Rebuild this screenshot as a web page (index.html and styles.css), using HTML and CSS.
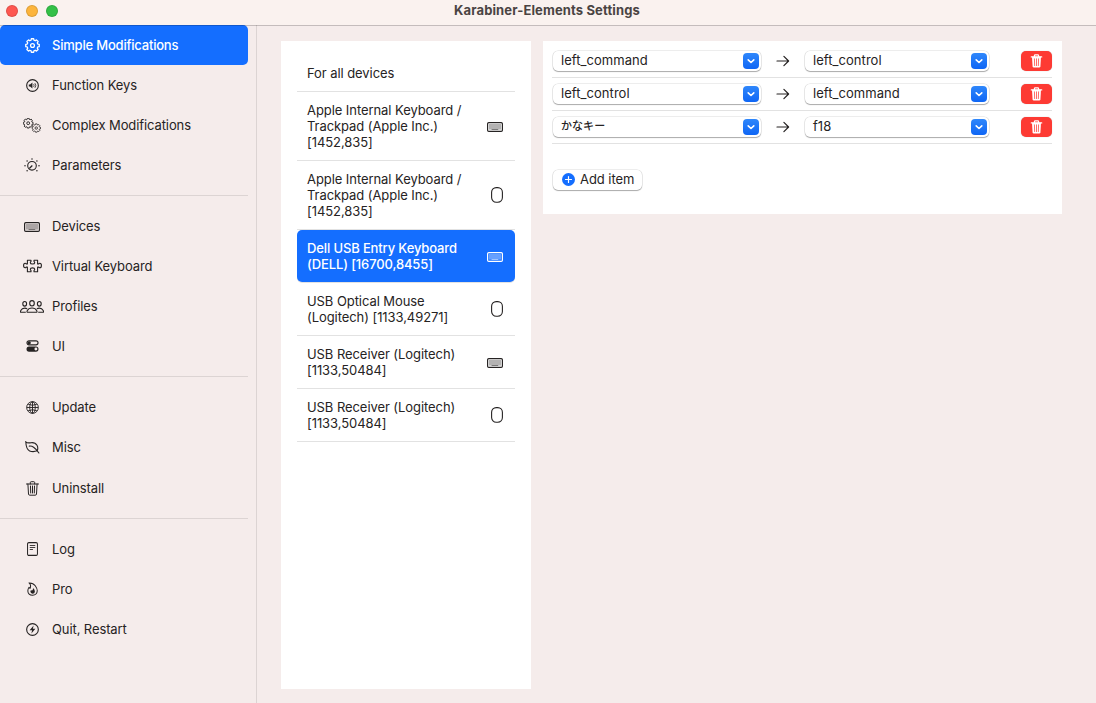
FILE: index.html
```html
<!DOCTYPE html>
<html lang="en">
<head>
    <meta charset="UTF-8">
    <meta name="viewport" content="width=device-width, initial-scale=1.0">
    <title>Karabiner-Elements Settings</title>
    <link rel="stylesheet" href="styles.css">
</head>
<body>
    <!-- Shared icons -->
    <svg class="hidden">
        <symbol id="icon-keyboard" viewBox="0 0 16 10">
            <rect x="0.6" y="0.6" width="14.8" height="8.8" rx="1.2" fill="none" stroke="currentColor" stroke-width="1.2"/>
            <rect x="2" y="2" width="12" height="5.6" fill="currentColor" opacity=".35"/>
            <path d="M4.6 7.5h6.6" stroke="currentColor" stroke-width="1" opacity=".5"/>
        </symbol>
        <symbol id="icon-mouse" viewBox="0 0 12 16">
            <rect x="0.6" y="0.6" width="10.8" height="14.6" rx="4.6" fill="none" stroke="currentColor" stroke-width="1.1"/>
        </symbol>
        <symbol id="icon-gear" viewBox="-7 -7 14 14">
            <path d="M-1.32-4.93L-1.11-6.3H1.11L1.32-4.93 2.55-4.42 3.67-5.24 5.24-3.67 4.42-2.55 4.93-1.32 6.3-1.11V1.11L4.93 1.32 4.42 2.55 5.24 3.67 3.67 5.24 2.55 4.42 1.32 4.93 1.11 6.3H-1.11L-1.32 4.93-2.55 4.42-3.67 5.24-5.24 3.67-4.42 2.55-4.93 1.32-6.3 1.11V-1.11L-4.93-1.32-4.42-2.55-5.24-3.67-3.67-5.24-2.55-4.42z" fill="none" stroke="currentColor" stroke-width="1.2" stroke-linejoin="round"/>
            <circle r="1.8" fill="none" stroke="currentColor" stroke-width="1.2"/>
        </symbol>
        <symbol id="icon-trash" viewBox="0 0 13 15">
            <path d="M.5 3h12M4.300 3V1.600q0-.9.9-.9h2.600q.9 0 .9.900V3M1.900 3l.6 10q.1 1.200 1.200 1.200h5.600q1.100 0 1.200-1.200l.6-10M4.500 5l.2 7M6.500 5v7M8.500 5l-.2 7" fill="none" stroke="currentColor" stroke-linecap="round"/>
        </symbol>
        <symbol id="icon-trash-fill" viewBox="0 0 13 15">
            <path d="M.9 3.100h11.200M4.300 3V1.700q0-.8.9-.8h2.600q.9 0 .9.800V3" fill="none" stroke="currentColor" stroke-width="1.300" stroke-linecap="round"/>
            <path d="M1.700 3h9.600l-.6 10.200q-.1 1.300-1.300 1.300H3.600q-1.200 0-1.300-1.300z" fill="currentColor"/>
            <path d="M4.300 5.200l.2 7.200M6.500 5.200v7.200M8.700 5.200l-.2 7.200" stroke="#fd3a33" stroke-width=".8" stroke-linecap="round"/>
        </symbol>
        <symbol id="icon-arrow" viewBox="0 0 14 12">
            <path d="M1 6h11.500M7.900 1.300L12.600 6 7.900 10.700" fill="none" stroke="currentColor" stroke-width="1.200" stroke-linecap="round" stroke-linejoin="round"/>
        </symbol>
        <symbol id="icon-chevron" viewBox="0 0 16 16">
            <path d="M5.200 6.900L8 9.500l2.800-2.600" fill="none" stroke="currentColor" stroke-width="1.600" stroke-linecap="round" stroke-linejoin="round"/>
        </symbol>
    </svg>

    <header class="titlebar">
        <div class="lights">
            <span class="light close"></span>
            <span class="light minimize"></span>
            <span class="light zoom"></span>
        </div>
        <h1>Karabiner-Elements Settings</h1>
    </header>

    <div class="window">
        <nav class="sidebar">
            <ul>
                <li class="active"><svg width="15" height="15"><use href="#icon-gear"/></svg><span>Simple Modifications</span></li>
                <li>
                    <svg width="13" height="13" viewBox="0 0 14 14" class="nudge">
                        <circle cx="7" cy="7" r="6.300" fill="none" stroke="currentColor" stroke-width="1.200"/>
                        <path d="M3 5.800h1.400L6.900 3.900v6.200L4.400 8.200H3z" fill="currentColor"/>
                        <path d="M8.200 5.600q1 1.400 0 2.800M9.600 4.500q1.900 2.500 0 5" fill="none" stroke="currentColor" stroke-width=".9"/>
                    </svg>
                    <span>Function Keys</span>
                </li>
                <li>
                    <svg width="18" height="15" viewBox="0 0 18 15">
                        <use href="#icon-gear" x="-0.300" y="-0.300" width="11" height="11"/>
                        <use href="#icon-gear" x="8.500" y="5.300" width="9.500" height="9.500"/>
                    </svg>
                    <span>Complex Modifications</span>
                </li>
                <li>
                    <svg width="16" height="14" viewBox="0 0 16 14">
                        <circle cx="8" cy="7.800" r="4.300" fill="none" stroke="currentColor" stroke-width="1.100"/>
                        <path d="M5.300 10.500L8.300 7.500" stroke="currentColor" stroke-width="1.200"/>
                        <path d="M8 .9h.01M3.100 2.900h.01M12.900 2.900h.01M1 7.800h.01M15 7.800h.01M3.100 12.700h.01M12.900 12.700h.01" stroke="currentColor" stroke-width="1.500" stroke-linecap="round"/>
                    </svg>
                    <span>Parameters</span>
                </li>
            </ul>
            <ul>
                <li><svg width="16" height="10" class="drop"><use href="#icon-keyboard"/></svg><span>Devices</span></li>
                <li>
                    <svg width="19" height="14" viewBox="0 0 19 14" class="nudge">
                        <path d="M4.400 1.300H8v1.200q-.7.500-.7 1.200 0 1.300 2.200 1.300t2.200-1.300q0-.7-.7-1.200V1.300h3.600v3.600h1.100q.5-.7 1.200-.7 1.500 0 1.500 2.300t-1.500 2.300q-.7 0-1.200-.7h-1.100v4.600H11v-1.300q.7-.5.700-1.200 0-1.300-2.200-1.300T7.300 10.200q0 .7.700 1.200v1.300H4.400V8.100H3.300q-.5.700-1.200.700Q.6 8.800.6 6.500t1.500-2.300q.7 0 1.200.7h1.100z" fill="none" stroke="currentColor" stroke-width="1.100" stroke-linejoin="round"/>
                    </svg>
                    <span>Virtual Keyboard</span>
                </li>
                <li>
                    <svg width="24" height="13" viewBox="0 0 24 13">
                        <g fill="none" stroke="currentColor" stroke-width="1.100">
                            <ellipse cx="12" cy="3.300" rx="2.300" ry="2.700"/>
                            <ellipse cx="4.700" cy="3.800" rx="1.900" ry="2.300"/>
                            <ellipse cx="19.300" cy="3.800" rx="1.900" ry="2.300"/>
                            <path d="M7.200 12.300q-.5-.4 0-1.500Q8.600 8 12 8t4.800 2.800q.5 1.100 0 1.500z"/>
                            <path d="M5.800 12.300H.9q-.8-.3-.1-1.800Q2 8.100 4.700 8.100q1.500 0 2.500.8M18.200 12.300h4.900q.8-.3.1-1.800-1.200-2.400-3.900-2.400-1.500 0-2.500.8"/>
                        </g>
                    </svg>
                    <span>Profiles</span>
                </li>
                <li>
                    <svg width="13" height="12" viewBox="0 0 14 13" class="nudge">
                        <rect x="1" y=".9" width="12" height="4.400" rx="2.200" fill="none" stroke="currentColor" stroke-width="1.200"/>
                        <circle cx="3.400" cy="3.100" r="1.800" fill="currentColor"/>
                        <rect x=".5" y="7" width="13" height="5.600" rx="2.800" fill="currentColor"/>
                        <circle cx="10.700" cy="9.800" r="1.600" fill="#f5eceb"/>
                    </svg>
                    <span>UI</span>
                </li>
            </ul>
            <ul class="loose">
                <li>
                    <svg width="13" height="13" viewBox="0 0 14 14" class="nudge">
                        <g fill="none" stroke="currentColor">
                            <circle cx="7" cy="7" r="6.300"/>
                            <ellipse cx="7" cy="7" rx="3" ry="6.200"/>
                            <path d="M7 .8v12.400M.8 7h12.400M2.300 3.500q4.700 2.200 9.400 0M2.300 10.500q4.700-2.200 9.400 0"/>
                        </g>
                    </svg>
                    <span>Update</span>
                </li>
                <li>
                    <svg width="15" height="13" viewBox="0 0 15 13">
                        <path d="M.8.8Q2.200 2.300 6 1.700q4.100-.5 6 2.600 1.400 2.500.3 5.500-4.300 1.500-7.700.1Q1.100 8.400.8.800zM4.300 5.100q2.400-.2 4.300 1.100 3 2.100 5.300 5.800" fill="none" stroke="currentColor" stroke-width="1.100" stroke-linecap="round"/>
                    </svg>
                    <span>Misc</span>
                </li>
                <li><svg width="13" height="15"><use href="#icon-trash"/></svg><span>Uninstall</span></li>
            </ul>
            <ul>
                <li>
                    <svg width="11" height="14" viewBox="0 0 12 14" preserveAspectRatio="none" class="nudge">
                        <rect x=".6" y=".6" width="10.800" height="12.800" rx="1.400" fill="none" stroke="currentColor" stroke-width="1.100"/>
                        <path d="M3 3.500h6M3 5.500h6M3 7.500h3.500" stroke="currentColor" stroke-width=".9"/>
                    </svg>
                    <span>Log</span>
                </li>
                <li>
                    <svg width="11" height="14" viewBox="0 0 12 15" class="nudge">
                        <path d="M2.200.9q4.500-.2 6.800 3 2.300 3.100 2.200 5.500-.3 4.600-5.100 4.900Q1.200 14.200.9 9.600q0-2.200 1.300-4l1.100 1.300Q5 3.400 2.200.9z" fill="none" stroke="currentColor" stroke-width="1.100" stroke-linejoin="round"/>
                        <path d="M6.600 6.500q2.100 2 2 4-.2 2.100-2.500 2.100-2.200-.1-2.400-2 0-1 .8-1.900l.9.700q1.400-1.200 1.200-2.900z" fill="currentColor"/>
                    </svg>
                    <span>Pro</span>
                </li>
                <li>
                    <svg width="13" height="13" viewBox="0 0 14 14" class="nudge">
                        <circle cx="7" cy="7" r="6.300" fill="none" stroke="currentColor" stroke-width="1.200"/>
                        <path d="M8.200 2.600L3.900 7.700h2.700l-.8 3.700 4.300-5.100H7.400z" fill="currentColor"/>
                    </svg>
                    <span>Quit, Restart</span>
                </li>
            </ul>
        </nav>

        <main class="content">
            <section class="devices">
                <div class="device"><p>For all devices</p></div>
                <div class="device"><p>Apple Internal Keyboard / Trackpad (Apple Inc.) [1452,835]</p><svg class="keyboard"><use href="#icon-keyboard"/></svg></div>
                <div class="device"><p>Apple Internal Keyboard / Trackpad (Apple Inc.) [1452,835]</p><svg class="mouse"><use href="#icon-mouse"/></svg></div>
                <div class="device selected"><p>Dell USB Entry Keyboard (DELL) [16700,8455]</p><svg class="keyboard"><use href="#icon-keyboard"/></svg></div>
                <div class="device"><p>USB Optical Mouse (Logitech) [1133,49271]</p><svg class="mouse"><use href="#icon-mouse"/></svg></div>
                <div class="device"><p>USB Receiver (Logitech) [1133,50484]</p><svg class="keyboard"><use href="#icon-keyboard"/></svg></div>
                <div class="device"><p>USB Receiver (Logitech) [1133,50484]</p><svg class="mouse"><use href="#icon-mouse"/></svg></div>
            </section>

            <section class="mappings">
                <div class="mapping">
                    <button class="select from"><span>left_command</span><svg><use href="#icon-chevron"/></svg></button>
                    <svg class="arrow"><use href="#icon-arrow"/></svg>
                    <button class="select to"><span>left_control</span><svg><use href="#icon-chevron"/></svg></button>
                    <button class="delete"><svg><use href="#icon-trash-fill"/></svg></button>
                </div>
                <div class="mapping">
                    <button class="select from"><span>left_control</span><svg><use href="#icon-chevron"/></svg></button>
                    <svg class="arrow"><use href="#icon-arrow"/></svg>
                    <button class="select to"><span>left_command</span><svg><use href="#icon-chevron"/></svg></button>
                    <button class="delete"><svg><use href="#icon-trash-fill"/></svg></button>
                </div>
                <div class="mapping">
                    <button class="select from"><span class="kana">かなキー</span><svg><use href="#icon-chevron"/></svg></button>
                    <svg class="arrow"><use href="#icon-arrow"/></svg>
                    <button class="select to"><span>f18</span><svg><use href="#icon-chevron"/></svg></button>
                    <button class="delete"><svg><use href="#icon-trash-fill"/></svg></button>
                </div>
                <button class="add">
                    <svg width="13" height="13" viewBox="0 0 13 13">
                        <circle cx="6.500" cy="6.500" r="6.500" fill="#146eff"/>
                        <path d="M6.500 3.500v6M3.500 6.500h6" stroke="#fff" stroke-width="1.200" stroke-linecap="round"/>
                    </svg>
                    <span>Add item</span>
                </button>
            </section>
        </main>
    </div>
</body>
</html>
```

FILE: styles.css
```css
* {
    box-sizing: border-box;
}

body {
    margin: 0;
    height: 703px;
    display: flex;
    flex-direction: column;
    overflow: hidden;
    background-color: #f5eceb;
    color: #262323;
    font-family: Inter, "Noto Sans CJK JP", sans-serif;
    font-size: 13px;
    line-height: 16px;
}

ul, p, h1 {
    margin: 0;
    padding: 0;
}

button {
    font: inherit;
    color: inherit;
    border: none;
    padding: 0;
}

svg {
    flex: none;
}

.hidden {
    display: none;
}

/* Title bar */
.titlebar {
    position: relative;
    z-index: 1;
    display: grid;
    grid-template-columns: 1fr auto 1fr;
    height: 25px;
    padding: 0 8px 3px 6px;
    align-items: center;
    background-color: #faf2ef;
    box-shadow: 0 1px 0 rgba(0, 0, 0, 0.2);
}

.titlebar h1 {
    font-size: 13px;
    font-weight: 700;
    line-height: 16px;
    letter-spacing: 0.13px;
    padding-bottom: 2px;
    color: #4a4443;
}

.lights {
    display: flex;
    gap: 8px;
}

.light {
    width: 12px;
    height: 12px;
    border-radius: 50%;
    border: 1px solid rgba(0, 0, 0, 0.12);
}

.close {
    background-color: #fe5750;
}

.minimize {
    background-color: #fcb43c;
}

.zoom {
    background-color: #33c047;
}

.window {
    flex: 1;
    display: flex;
    min-height: 0;
}

/* Sidebar */
.sidebar {
    width: 257px;
    padding-right: 8px;
    border-right: 1px solid #dcd4d3;
    letter-spacing: -0.1px;
}

.sidebar ul {
    list-style: none;
}

.sidebar ul + ul {
    margin-top: 10px;
    padding-top: 10px;
    border-top: 1px solid #dcd4d3;
}

.sidebar li {
    display: grid;
    grid-template-columns: 24px 1fr;
    column-gap: 8px;
    align-items: center;
    height: 40px;
    padding-left: 20px;
}

.sidebar li svg {
    justify-self: center;
}

.sidebar li .nudge {
    margin-left: 1px;
}

.sidebar li .drop {
    margin-top: 1px;
}

.sidebar .loose li:last-child {
    margin-top: 1px;
}

.sidebar .active {
    background-color: #146eff;
    border-radius: 5px;
    color: #fff;
    font-weight: 500;
    letter-spacing: -0.2px;
}

/* Content */
.content {
    flex: 1;
    display: flex;
    align-items: flex-start;
    gap: 12px;
    padding: 16px 24px 14px;
}

.devices {
    width: 250px;
    height: 100%;
    padding: 14px 16px;
    background-color: #fff;
    letter-spacing: -0.07px;
}

.device {
    display: flex;
    align-items: center;
    justify-content: space-between;
    margin-bottom: 1px;
    padding: 10px 12px 10px 10px;
    box-shadow: 0 1px 0 #e2e2e2;
}

.device:first-child {
    height: 36px;
}

.device p {
    width: 160px;
}

.device.selected {
    border-radius: 5px;
    background-color: #146eff;
    color: #fff;
    font-weight: 500;
    letter-spacing: -0.13px;
}

.keyboard {
    width: 16px;
    height: 10px;
    margin-top: 2px;
}

.mouse {
    width: 12px;
    height: 16px;
}

.mappings {
    width: 519px;
    height: 173px;
    padding: 4px 10px 0 9px;
    background-color: #fff;
}

.mapping {
    display: flex;
    align-items: center;
    height: 33px;
    padding: 0 0 1px 1px;
    border-bottom: 1px solid #e2e2e2;
}

.select {
    display: flex;
    align-items: center;
    justify-content: space-between;
    height: 20px;
    padding: 0 2px 0 8px;
    border-radius: 5px;
    background-color: #fff;
    box-shadow: 0 0 0 0.5px rgba(0, 0, 0, 0.14), 0 1px 1px rgba(0, 0, 0, 0.28);
    letter-spacing: 0.05px;
}

.select span {
    padding-bottom: 1px;
}

.select svg {
    width: 16px;
    height: 16px;
    border-radius: 4px;
    background: linear-gradient(#2f87fb, #0f66f5);
    color: #fff;
}

.from {
    width: 208px;
}

.to {
    width: 184px;
}

.select .kana {
    font-size: 11px;
    font-weight: 500;
}

.arrow {
    width: 14px;
    height: 12px;
    margin: 0 15px;
}

.delete {
    display: flex;
    align-items: center;
    justify-content: center;
    width: 31px;
    height: 20px;
    margin-left: auto;
    border-radius: 5px;
    background-color: #fd3a33;
    color: #fff;
    box-shadow: 0 0 1px rgba(0, 0, 0, 0.3);
}

.delete svg {
    width: 13px;
    height: 14px;
}

.add {
    display: flex;
    align-items: center;
    gap: 5px;
    height: 20px;
    margin: 26px 0 0 1px;
    padding: 0 8px 1px 9px;
    border-radius: 5px;
    background-color: #fff;
    box-shadow: 0 0 0 0.5px rgba(0, 0, 0, 0.14), 0 1px 1px rgba(0, 0, 0, 0.28);
    letter-spacing: -0.05px;
}

.add span {
    padding-bottom: 1px;
}
```
